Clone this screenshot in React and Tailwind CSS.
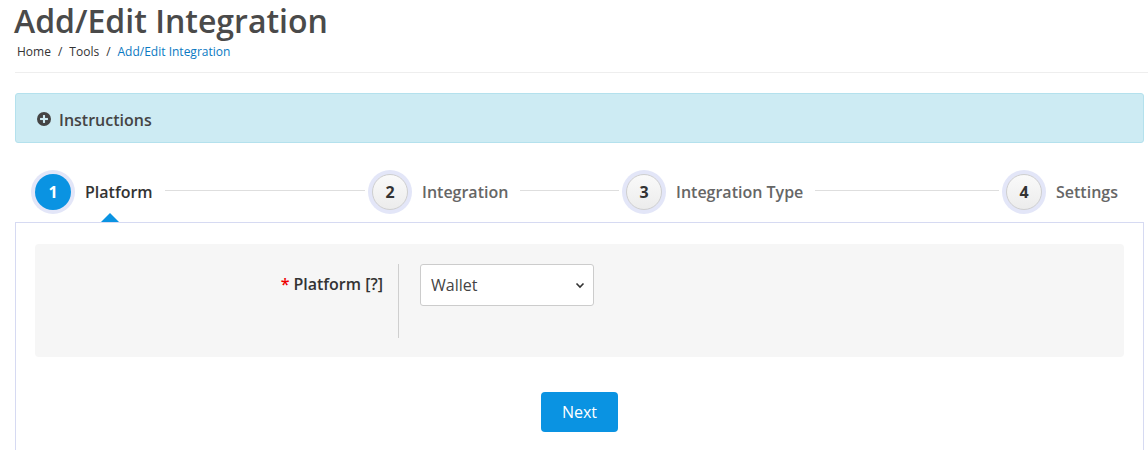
import React from 'react';

const steps = [
    { n: 1, label: 'Platform', w: 'w-[337px]', active: true },
    { n: 2, label: 'Integration', w: 'w-[254px]' },
    { n: 3, label: 'Integration Type', w: 'w-[380px]' },
    { n: 4, label: 'Settings', w: 'flex-1', last: true },
];

const App = () => {
    return (
        <div className="w-[1148px] h-[450px] overflow-hidden bg-white text-[#333]" style={{ fontFamily: '"Open Sans", "Liberation Sans", sans-serif' }}>
            <div className="pl-[15px] pr-[4px]">
                {/* Page header */}
                <h1 className="text-[32px] leading-[40px] font-semibold text-[#4a4a4a] pt-[1px] -ml-[1px]">Add/Edit Integration</h1>
                <div className="text-[12px] leading-[16px] mt-[3px] ml-[2px] flex gap-[7px]">
                    <span>Home</span>
                    <span>/</span>
                    <span>Tools</span>
                    <span>/</span>
                    <span className="text-[#0a79c2]">Add/Edit Integration</span>
                </div>
                <div className="h-px bg-[#eeeeee] mt-[12px] -mr-[4px]" />

                {/* Instructions */}
                <div className="mt-[20px] h-[50px] rounded-[3px] border border-[#b4e1ed] bg-[#cdebf3] flex items-center pl-[21px] gap-[8px] pt-[3px]">
                    <svg width="14" height="14" viewBox="0 0 16 16" className="-mt-[2px]">
                        <circle cx="8" cy="8" r="8" fill="#444" />
                        <rect x="3.5" y="6.8" width="9" height="2.4" fill="#cdebf3" />
                        <rect x="6.8" y="3.5" width="2.4" height="9" fill="#cdebf3" />
                    </svg>
                    <span className="text-[16px] font-semibold text-[#444]">Instructions</span>
                </div>

                {/* Steps */}
                <div className="mt-[26px] flex items-center pl-[16px] pr-[26px] h-[46px]">
                    {steps.map(s => (
                        <div key={s.n} className={`${s.w} flex items-center`}>
                            <div className="w-[44px] h-[44px] rounded-full bg-[#e3e6f8] flex items-center justify-center shrink-0">
                                {s.active ? (
                                    <div className="w-[36px] h-[36px] rounded-full bg-[#0a93e2] text-white text-[16px] font-bold flex items-center justify-center">{s.n}</div>
                                ) : (
                                    <div className="w-[36px] h-[36px] rounded-full bg-gradient-to-b from-[#fafafa] to-[#ececec] border border-[#cfcfcf] text-[#333] text-[16px] font-bold flex items-center justify-center">{s.n}</div>
                                )}
                            </div>
                            <span className={`ml-[10px] text-[16px] font-semibold whitespace-nowrap ${s.active ? 'text-[#333]' : 'text-[#666]'}`}>{s.label}</span>
                            {!s.last && <div className="flex-1 h-px bg-[#dedede] ml-[12px] mr-[3px] -mt-[4px]" />}
                        </div>
                    ))}
                </div>

                {/* Panel */}
                <div className="relative mt-[7px] border-t border-l border-r border-[#d6daf2] h-[240px] pt-[21px] px-[19px]">
                    <div className="absolute -top-[10px] left-[85px] w-0 h-0 border-l-[9px] border-r-[9px] border-b-[9px] border-l-transparent border-r-transparent border-b-[#0a93e2]" />
                    <div className="bg-[#f6f6f6] rounded-[4px] h-[113px] flex pt-[20px]">
                        <div className="w-[364px] pr-[15px] pt-[8px] text-right text-[16px] font-semibold text-[#333] border-r border-[#cfcfcf] h-[74px]">
                            <span className="text-[#e00] mr-[4px]">*</span>Platform [?]
                        </div>
                        <div className="pl-[21px]">
                            <div className="w-[174px] h-[42px] bg-white border border-[#cccccc] rounded-[3px] flex items-center justify-between pl-[10px] pr-[8px]">
                                <span className="text-[16px] text-[#444]">Wallet</span>
                                <svg width="10" height="8" viewBox="0 0 10 8" fill="none">
                                    <path d="M1.5 2.5 L5 6 L8.5 2.5" stroke="#333" strokeWidth="1.6" />
                                </svg>
                            </div>
                        </div>
                    </div>
                    <div className="flex justify-center mt-[35px]">
                        <button className="w-[77px] h-[40px] rounded-[4px] bg-[#0a93e2] text-white text-[16px]">Next</button>
                    </div>
                </div>
            </div>
        </div>
    );
};

export default App;
